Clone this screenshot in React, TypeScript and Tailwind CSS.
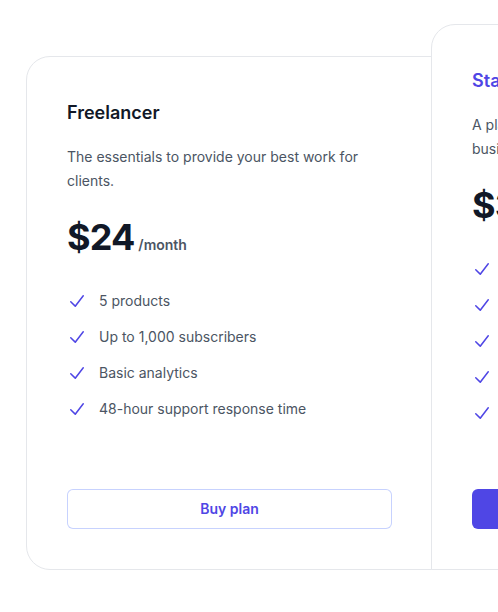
import React from "react";

function Check() {
  return (
    <svg viewBox="0 0 20 20" fill="currentColor" aria-hidden="true" className="h-6 w-5 flex-none text-[#4f46e5]">
      <path
        fillRule="evenodd"
        d="M16.704 4.153a.75.75 0 01.143 1.052l-8 10.5a.75.75 0 01-1.127.075l-4.5-4.5a.75.75 0 011.06-1.06l3.894 3.893 7.48-9.817a.75.75 0 011.05-.143z"
        clipRule="evenodd"
      />
    </svg>
  );
}

function Features({ items }: { items: string[] }) {
  return (
    <ul className="mt-8 space-y-3 text-sm leading-6 text-[#4b5563]">
      {items.map((f) => (
        <li key={f} className="flex gap-x-3">
          <Check />
          <span className="whitespace-nowrap">{f}</span>
        </li>
      ))}
    </ul>
  );
}

export default function App() {
  return (
    <div className="w-[498px] h-[612px] overflow-hidden bg-white font-['Inter',sans-serif] antialiased">
      <div className="flex pt-6 pl-[26px]">
        <div className="mt-8 w-[407px] shrink-0 rounded-l-3xl border border-[#e5e7eb] bg-white p-10 flex flex-col justify-between">
          <div>
            <h3 className="text-lg font-semibold leading-8 text-[#111827]">Freelancer</h3>
            <p className="mt-4 text-sm leading-6 text-[#4b5563]">
              The essentials to provide your best work for clients.
            </p>
            <p className="mt-6 flex items-baseline gap-x-1">
              <span className="text-4xl font-bold tracking-tight text-[#111827]">$24</span>
              <span className="text-sm font-semibold leading-6 text-[#4b5563]">/month</span>
            </p>
            <Features
              items={["5 products", "Up to 1,000 subscribers", "Basic analytics", "48-hour support response time"]}
            />
          </div>
          <a
            href="#"
            className="mt-8 block rounded-md px-3 py-2 text-center text-sm font-semibold leading-6 text-[#4f46e5] ring-1 ring-inset ring-[#c7d2fe]"
          >
            Buy plan
          </a>
        </div>
        <div className="relative z-10 -ml-[2px] h-[546px] w-[407px] shrink-0 rounded-t-3xl border border-[#e5e7eb] bg-white p-10 flex flex-col justify-between">
          <div>
            <h3 className="text-lg font-semibold leading-8 text-[#4f46e5]">Startup</h3>
            <p className="mt-4 text-sm leading-6 text-[#4b5563]">
              A plan that scales with your rapidly growing business.
            </p>
            <p className="mt-6 flex items-baseline gap-x-1">
              <span className="text-4xl font-bold tracking-tight text-[#111827]">$32</span>
              <span className="text-sm font-semibold leading-6 text-[#4b5563]">/month</span>
            </p>
            <Features
              items={[
                "25 products",
                "Up to 10,000 subscribers",
                "Advanced analytics",
                "24-hour support response time",
                "Marketing automations",
              ]}
            />
          </div>
          <a
            href="#"
            className="mt-8 block rounded-md bg-[#4f46e5] px-3 py-2 text-center text-sm font-semibold leading-6 text-white"
          >
            Buy plan
          </a>
        </div>
      </div>
    </div>
  );
}
